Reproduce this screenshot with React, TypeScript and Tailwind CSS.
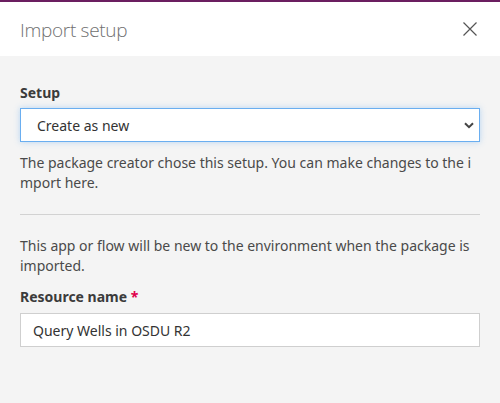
import React from "react";

export default function App() {
  return (
    <div
      className="w-[500px] h-[403px] bg-[#f4f4f4] flex flex-col overflow-hidden"
      style={{ fontFamily: '"Noto Sans", "Open Sans", sans-serif' }}
    >
      <div className="h-[2px] bg-[#6b1e60]" />
      <div className="h-[54px] bg-white flex items-center justify-between pl-[20px] pr-[23px]">
        <span
          className="text-[19px] font-light text-[#707070] tracking-[-0.3px] pt-[2px]"
          style={{ fontFamily: '"Open Sans", "Noto Sans", sans-serif' }}
        >
          Import setup
        </span>
        <svg width="14" height="14" viewBox="0 0 14 14" className="mt-[-1px]">
          <path d="M0.5 0.5 L13.5 13.5 M13.5 0.5 L0.5 13.5" stroke="#555" strokeWidth="1.2" fill="none" />
        </svg>
      </div>
      <div className="flex flex-col px-[20px] pt-[27px] text-[#444]">
        <div className="text-[14px] font-bold text-[#3b3b3b] leading-[20px]">Setup</div>
        <div className="mt-[5px] h-[34px] bg-white border border-[#6aaef0] shadow-[0_0_6px_rgba(106,174,240,0.45)] flex items-center justify-between pl-[16px] pr-[5px]">
          <span className="text-[14px] text-[#333]">Create as new</span>
          <svg width="10" height="7" viewBox="0 0 10 7">
            <path d="M1 1.2 L5 5.2 L9 1.2" stroke="#444" strokeWidth="2" fill="none" />
          </svg>
        </div>
        <div className="mt-[11px] text-[14px] leading-[20px] text-[#4a4a4a]">
          <div className="whitespace-nowrap">The package creator chose this setup. You can make changes to the i</div>
          <div className="whitespace-nowrap">mport here.</div>
        </div>
        <div className="mt-[21px] h-px bg-[#d2d2d2]" />
        <div className="mt-[21px] text-[14px] leading-[20px] text-[#4a4a4a]">
          <div className="whitespace-nowrap">This app or flow will be new to the environment when the package is</div>
          <div className="whitespace-nowrap">imported.</div>
        </div>
        <div className="mt-[11px] text-[14px] font-bold text-[#3b3b3b] leading-[20px]">
          Resource name <span className="text-[#e0004c]">*</span>
        </div>
        <div className="mt-[6px] h-[34px] bg-white border border-[#cfcfcf] flex items-center pl-[12px]">
          <span className="text-[14px] text-[#333]">Query Wells in OSDU R2</span>
        </div>
      </div>
    </div>
  );
}
